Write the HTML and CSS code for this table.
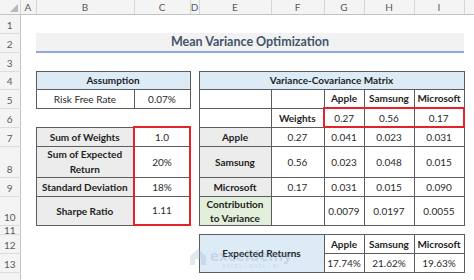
FILE: index.html
```html
<!DOCTYPE html>
<html>
<head>
<meta charset="utf-8">
<link rel="stylesheet" href="styles.css">
</head>
<body>
<div class="sheet">
<table class="grid">
<colgroup>
<col class="c-rn"><col class="c-a"><col class="c-b"><col class="c-c"><col class="c-d"><col class="c-e"><col class="c-f"><col class="c-g"><col class="c-h"><col class="c-i"><col class="c-j">
</colgroup>
<tr class="h14 hdr">
<td class="corner"><span class="tri"></span></td><td>A</td><td>B</td><td>C</td><td>D</td><td>E</td><td>F</td><td>G</td><td>H</td><td>I</td><td></td>
</tr>
<tr class="h19"><td class="rn">1</td><td></td><td></td><td></td><td></td><td></td><td></td><td></td><td></td><td></td><td></td></tr>
<tr class="h19"><td class="rn">2</td><td></td><td class="title" colspan="8">Mean Variance Optimization</td><td></td></tr>
<tr class="h19"><td class="rn">3</td><td></td><td></td><td></td><td></td><td></td><td></td><td></td><td></td><td></td><td></td></tr>
<tr class="h18"><td class="rn">4</td><td></td><td class="b blue bold" colspan="2">Assumption</td><td></td><td class="b blue bold" colspan="5">Variance-Covariance Matrix</td><td></td></tr>
<tr class="h19"><td class="rn">5</td><td></td><td class="b">Risk Free Rate</td><td class="b">0.07%</td><td></td><td class="b"></td><td class="b"></td><td class="b bold">Apple</td><td class="b bold">Samsung</td><td class="b bold">Microsoft</td><td></td></tr>
<tr class="h19"><td class="rn">6</td><td></td><td></td><td></td><td></td><td class="b"></td><td class="b bold">Weights</td><td class="b rt rb rl">0.27</td><td class="b rt rb">0.56</td><td class="b rt rb rr">0.17</td><td></td></tr>
<tr class="h19"><td class="rn">7</td><td></td><td class="b grey bold">Sum of Weights</td><td class="b rl rr rt">1.0</td><td></td><td class="b grey bold">Apple</td><td class="b">0.27</td><td class="b">0.041</td><td class="b">0.023</td><td class="b">0.031</td><td></td></tr>
<tr class="h30"><td class="rn">8</td><td></td><td class="b grey bold wrap">Sum of Expected Return</td><td class="b rl rr">20%</td><td></td><td class="b grey bold">Samsung</td><td class="b">0.56</td><td class="b">0.023</td><td class="b">0.048</td><td class="b">0.015</td><td></td></tr>
<tr class="h19"><td class="rn">9</td><td></td><td class="b grey bold">Standard Deviation</td><td class="b rl rr">18%</td><td></td><td class="b grey bold">Microsoft</td><td class="b">0.17</td><td class="b">0.031</td><td class="b">0.015</td><td class="b">0.090</td><td></td></tr>
<tr class="h29"><td class="rn">10</td><td></td><td class="b grey bold">Sharpe Ratio</td><td class="b rl rr rb">1.11</td><td></td><td class="b green bold wrap2">Contribution to Variance</td><td class="b"></td><td class="b">0.0079</td><td class="b">0.0197</td><td class="b">0.0055</td><td></td></tr>
<tr class="h9"><td class="rn small">11</td><td></td><td></td><td></td><td></td><td></td><td></td><td></td><td></td><td></td><td></td></tr>
<tr class="h19"><td class="rn">12</td><td></td><td></td><td></td><td></td><td class="b blue bold" colspan="2" rowspan="2">Expected Returns</td><td class="b bold">Apple</td><td class="b bold">Samsung</td><td class="b bold">Microsoft</td><td></td></tr>
<tr class="h19"><td class="rn">13</td><td></td><td></td><td></td><td></td><td class="b">17.74%</td><td class="b">21.62%</td><td class="b">19.63%</td><td></td></tr>
<tr class="h19"><td class="rn"></td><td></td><td></td><td></td><td></td><td></td><td></td><td></td><td></td><td></td><td></td></tr>
</table>
<div class="watermark">
<svg class="wm-icon" width="18" height="18" viewBox="0 0 18 18"><path d="M1 8 L9 1 L17 8 L17 17 L12 17 L12 11 L6 11 L6 17 L1 17 Z" fill="#9fb4cf"/></svg>
<div class="wm-text"><span class="wm-name">exceldemy</span><span class="wm-sub">EXCEL · DATA · BI</span></div>
</div>
</div>
</body>
</html>
```
FILE: styles.css
```css
html, body {
  margin: 0;
  padding: 0;
  background: #ffffff;
}
body {
  width: 474px;
  height: 280px;
  overflow: hidden;
  font-family: Lato, "Liberation Sans", sans-serif;
  font-size: 10px;
  color: #2b2b2b;
}
.sheet {
  position: relative;
  width: 474px;
  height: 280px;
  overflow: hidden;
}
.grid {
  border-collapse: collapse;
  border-spacing: 0;
  table-layout: fixed;
  width: 474px;
}
.c-rn { width: 20px; }
.c-a { width: 16px; }
.c-b { width: 98px; }
.c-c { width: 56px; }
.c-d { width: 9px; }
.c-e { width: 72px; }
.c-f { width: 53px; }
.c-g { width: 40px; }
.c-h { width: 50px; }
.c-i { width: 50px; }
.c-j { width: 10px; }

.grid td {
  padding: 0;
  text-align: center;
  vertical-align: middle;
  white-space: nowrap;
  overflow: hidden;
  line-height: 12px;
}
.h14 { height: 14px; }
.h18 { height: 18px; }
.h19 { height: 19px; }
.h29 { height: 29px; }
.h30 { height: 30px; }
.h9 { height: 9px; }

.hdr td {
  background: #f4f4f4;
  color: #5a5a5a;
  font-size: 10px;
  border-right: 1px solid #d6d6d6;
  border-bottom: 1px solid #c4c4c4;
}
.corner {
  position: relative;
}
.tri {
  position: absolute;
  right: 2px;
  bottom: 2px;
  width: 0;
  height: 0;
  border-left: 8px solid transparent;
  border-bottom: 8px solid #b8b8b8;
}
.grid td.rn {
  background: #f4f4f4;
  color: #5a5a5a;
  font-size: 10px;
  vertical-align: bottom;
  line-height: 11px;
  padding-bottom: 2px;
  border-right: 1px solid #c4c4c4;
  border-bottom: 1px solid #dcdcdc;
}
.grid td.rn.small {
  line-height: 8px;
  padding-bottom: 0;
}

.title {
  background: #f2f2f2;
  border-bottom: 2px solid #8eaadb;
  color: #44546a;
  font-weight: bold;
  font-size: 12.5px;
}
.b { border: 1px solid #5c5c5c; }
.bold { font-weight: bold; color: #1e1e1e; }
.blue { background: #ddebf7; }
.grey { background: #ececec; }
.green { background: #e2efda; }
.grid td.wrap {
  white-space: normal;
  line-height: 15px;
  padding: 0 6px;
}
.grid td.wrap2 {
  white-space: normal;
  line-height: 14px;
  padding: 0 2px;
}
.rl { border-left: 2px solid #e3232b; }
.rr { border-right: 2px solid #e3232b; }
.rt { border-top: 2px solid #e3232b; }
.rb { border-bottom: 2px solid #e3232b; }

.watermark {
  position: absolute;
  left: 189px;
  top: 248px;
  display: flex;
  align-items: flex-start;
  gap: 3px;
  opacity: 0.3;
  pointer-events: none;
}
.wm-icon { display: block; }
.wm-text {
  display: flex;
  flex-direction: column;
  align-items: center;
  line-height: 1;
}
.wm-name {
  font-family: "Open Sans", sans-serif;
  font-size: 15px;
  font-weight: bold;
  color: #8ea6c6;
  letter-spacing: 0.2px;
}
.wm-sub {
  font-size: 5px;
  color: #8ea6c6;
  letter-spacing: 1px;
  margin-top: 1px;
}
```
